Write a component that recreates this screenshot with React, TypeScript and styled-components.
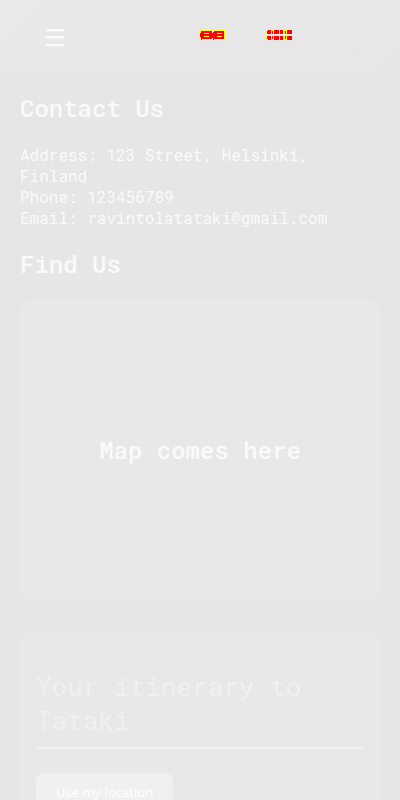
import React from "react";
import styled, { createGlobalStyle } from "styled-components";

const mono = `"Roboto Mono", "Liberation Mono", "DejaVu Sans Mono", monospace`;

const GlobalStyle = createGlobalStyle`
  * { box-sizing: border-box; }
  body { margin: 0; background: #e6e6e6; color: #fafafa; font-family: ${mono}; font-size: 16px; line-height: 21px; }
`;

const Header = styled.header`
  display: flex;
  align-items: center;
  justify-content: space-between;
  height: 72px;
  padding: 0 29px 2px 40px;
  background: linear-gradient(135deg, #e9e9e9, #e6e6e6);
`;

const MenuButton = styled.button`
  display: flex;
  padding: 6px;
  margin-top: 6px;
  border: 0;
  background: none;
  color: #fcfcfc;
`;

const Languages = styled.nav`
  display: flex;
  gap: 14px;
`;

const LanguageButton = styled.button<{ $wide?: boolean }>`
  display: flex;
  justify-content: flex-start;
  align-items: center;
  width: ${(p) => (p.$wide ? "52px" : "46px")};
  height: 36px;
  padding: 0 7px;
  border: 0;
  border-radius: 18px;
  background: #e7e7e7;
`;

const Main = styled.main`
  padding: 20px;
`;

const Title = styled.h2`
  margin: 0 0 20px;
  font-size: 24px;
  line-height: 32px;
  font-weight: 500;
`;

const Address = styled.address`
  margin-bottom: 20px;
  font-style: normal;
`;

const Card = styled.section`
  border-radius: 12px;
  background: #e8e8e8;
`;

const MapCard = styled(Card)`
  display: grid;
  place-items: center;
  height: 300px;
  margin-bottom: 32px;
  font-size: 24px;
  font-weight: 550;
`;

const RouteCard = styled(Card)`
  padding: 37px 16px 24px;
`;

const RouteTitle = styled.h1`
  margin: 0 0 24px;
  padding-bottom: 10px;
  border-bottom: 2px solid #f0f0f0;
  color: #f0f0f0;
  font-size: 26px;
  line-height: 34px;
  font-weight: 450;
`;

const LocationButton = styled.button`
  padding: 8px 20px;
  border: 0;
  border-radius: 8px;
  background: #f0f0f0;
  color: #fff;
  font: 13px/22px "Noto Sans", sans-serif;
`;

function LanguageMark({ split }: { split?: boolean }) {
  return (
    <svg width="26" height="10" viewBox="0 0 26 10" shapeRendering="crispEdges" aria-hidden="true">
      {split ? (
        <>
          <path fill="#ff0" d="M1 0h25v1H1zM0 1h6v3H0zM0 6h6v4H0zM13 1h1v3h-1zM13 6h1v4h-1zM17 1h2v3h-2zM17 6h2v4h-2zM20 1h1v3h-1zM20 6h1v4h-1z" />
          <path fill="#f00" d="M2 0h3v4H2zM1 1h4v3H1zM6 1h1v3H6zM8 0h5v4H8zM14 0h3v4h-3zM19 1h1v3h-1zM21 0h5v4h-5zM1 6h4v3H1zM2 9h3v1H2zM6 6h1v3H6zM8 6h5v4H8zM14 6h3v4h-3zM19 6h1v3h-1zM21 6h5v4h-5z" />
        </>
      ) : (
        <>
          <path fill="#ff0" d="M0 0h12v1H0zM13 0h12v1H13zM0 1h1v2H0zM24 1h1v8h-1zM0 7h1v2H0z" />
          <path fill="#f00" d="M1 1h11v1H1zM1 2h11v7H1zM0 3h1v4H0zM14 1h10v1H14zM13 2h11v7H13zM12 3h1v5h-1zM1 9h1v1H1zM13 9h1v1h-1z" />
          <path fill="#ff0" d="M4 3h5v1H4zM4 6h5v1H4zM17 3h5v1h-5zM17 6h5v1h-5zM2 9h9v1H2zM14 9h10v1H14z" />
        </>
      )}
    </svg>
  );
}

export default function App() {
  return (
    <>
      <GlobalStyle />
      <Header>
        <MenuButton aria-label="Menu">
          <svg width="18" height="18" viewBox="0 0 18 18" fill="currentColor" aria-hidden="true">
            <path d="M0 0h18v2H0zM0 7h18v2H0zM0 15h18v2H0z" />
            <path opacity="0.4" d="M0 2h18v1H0zM0 9h18v1H0z" />
          </svg>
        </MenuButton>
        <Languages>
          <LanguageButton $wide aria-label="First language"><LanguageMark /></LanguageButton>
          <LanguageButton $wide aria-label="Second language"><LanguageMark split /></LanguageButton>
          <LanguageButton aria-label="Third language" />
        </Languages>
      </Header>
      <Main>
        <Title>Contact Us</Title>
        <Address>
          Address: 123 Street, Helsinki, Finland
          <br />
          Phone: 123456789
          <br />
          Email: ravintolatataki@gmail.com
        </Address>
        <Title>Find Us</Title>
        <MapCard>Map comes here</MapCard>
        <RouteCard>
          <RouteTitle>Your itinerary to Tataki</RouteTitle>
          <LocationButton>Use my location</LocationButton>
        </RouteCard>
      </Main>
    </>
  );
}
